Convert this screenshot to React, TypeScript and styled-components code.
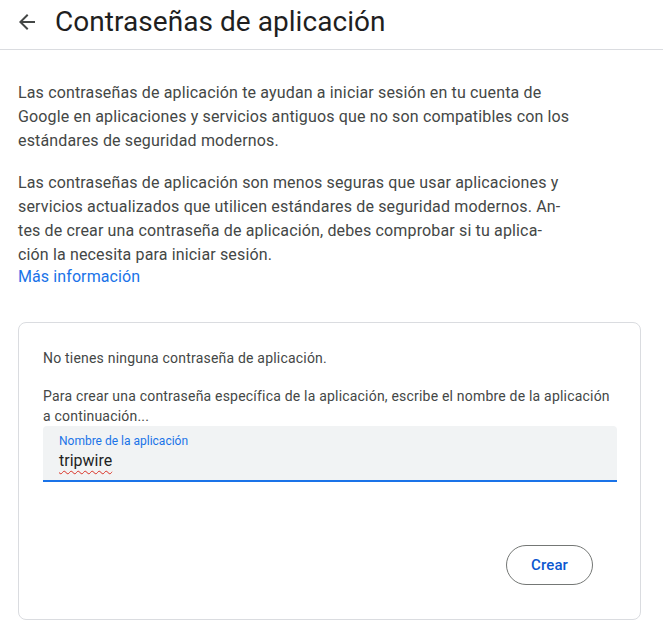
import React from "react";
import styled, { createGlobalStyle } from "styled-components";

const Global = createGlobalStyle`
  html, body { margin: 0; padding: 0; background: #fff; }
  body { font-family: Roboto, "Liberation Sans", Arial, sans-serif; -webkit-font-smoothing: antialiased; }
  * { box-sizing: border-box; }
`;

const Page = styled.div`
  width: 663px;
  height: 628px;
  overflow: hidden;
  background: #fff;
`;

const Header = styled.header`
  display: flex;
  align-items: center;
  height: 50px;
  padding: 0 0 6px 15px;
  border-bottom: 1px solid #dadce0;
`;

const BackButton = styled.button`
  display: flex;
  align-items: center;
  justify-content: center;
  width: 24px;
  height: 24px;
  padding: 0;
  border: none;
  background: none;
  color: #444746;
  cursor: pointer;
`;

const Title = styled.h1`
  margin: 0 0 0 16px;
  font-family: Roboto, "Liberation Sans", sans-serif;
  font-size: 28px;
  font-weight: 400;
  line-height: 36px;
  color: #1f1f1f;
  letter-spacing: 0.05px;
`;

const Content = styled.main`
  padding: 31px 22px 0 18px;
`;

const Paragraph = styled.p`
  margin: 0 0 18px;
  font-size: 16px;
  line-height: 24px;
  letter-spacing: 0.15px;
  color: #444746;
  white-space: nowrap;
`;

const LastParagraph = styled(Paragraph)`
  margin-bottom: 0;
`;

const Link = styled.a`
  display: block;
  margin-top: -2px;
  font-size: 16px;
  line-height: 24px;
  letter-spacing: 0.1px;
  color: #1a73e8;
  text-decoration: none;
`;

const Card = styled.section`
  margin-top: 33px;
  width: 623px;
  height: 298px;
  border: 1px solid #dadce0;
  border-radius: 8px;
  padding: 25px 23px 0 24px;
  display: flex;
  flex-direction: column;
`;

const CardText = styled.p<{ $gap?: number }>`
  margin: 0 0 ${(p) => p.$gap ?? 0}px;
  font-size: 14px;
  line-height: 20px;
  letter-spacing: 0.2px;
  color: #444746;
`;

const Field = styled.div`
  height: 56px;
  background: #f1f3f4;
  border-radius: 4px 4px 0 0;
  border-bottom: 2px solid #1a73e8;
  padding: 7px 16px 0;
  display: flex;
  flex-direction: column;
`;

const FieldLabel = styled.label`
  font-size: 12px;
  line-height: 16px;
  color: #1a73e8;
`;

const FieldValue = styled.span`
  font-size: 16px;
  line-height: 24px;
  color: #1f1f1f;
`;

const Misspelled = styled.span`
  text-decoration: underline wavy #d93025;
  text-decoration-thickness: 1px;
  text-underline-offset: 4px;
  text-decoration-skip-ink: none;
`;

const Actions = styled.div`
  display: flex;
  justify-content: flex-end;
  margin-top: 63px;
  padding-right: 24px;
`;

const OutlineButton = styled.button`
  height: 40px;
  padding: 0 24px;
  border: 1px solid #747775;
  border-radius: 20px;
  background: #fff;
  font-family: Roboto, "Liberation Sans", sans-serif;
  font-size: 15px;
  font-weight: 500;
  letter-spacing: 0.1px;
  color: #0b57d0;
  cursor: pointer;
`;

const ArrowBack = () => (
  <svg width="24" height="24" viewBox="0 0 24 24" fill="currentColor" aria-hidden="true">
    <path d="M7.825 13l5.6 5.6L12 20l-8-8 8-8 1.425 1.4-5.6 5.6H20v2H7.825z" />
  </svg>
);

export default function App() {
  return (
    <Page>
      <Global />
      <Header>
        <BackButton aria-label="Atrás">
          <ArrowBack />
        </BackButton>
        <Title>Contraseñas de aplicación</Title>
      </Header>
      <Content>
        <Paragraph>
          Las contraseñas de aplicación te ayudan a iniciar sesión en tu cuenta de
          <br />
          Google en aplicaciones y servicios antiguos que no son compatibles con los
          <br />
          estándares de seguridad modernos.
        </Paragraph>
        <LastParagraph>
          Las contraseñas de aplicación son menos seguras que usar aplicaciones y
          <br />
          servicios actualizados que utilicen estándares de seguridad modernos. An-
          <br />
          tes de crear una contraseña de aplicación, debes comprobar si tu aplica-
          <br />
          ción la necesita para iniciar sesión.
        </LastParagraph>
        <Link href="#">Más información</Link>
        <Card>
          <CardText $gap={18}>No tienes ninguna contraseña de aplicación.</CardText>
          <CardText>
            Para crear una contraseña específica de la aplicación, escribe el nombre de la aplicación
            a continuación...
          </CardText>
          <Field>
            <FieldLabel>Nombre de la aplicación</FieldLabel>
            <FieldValue>
              <Misspelled>tripwire</Misspelled>
            </FieldValue>
          </Field>
          <Actions>
            <OutlineButton>Crear</OutlineButton>
          </Actions>
        </Card>
      </Content>
    </Page>
  );
}
